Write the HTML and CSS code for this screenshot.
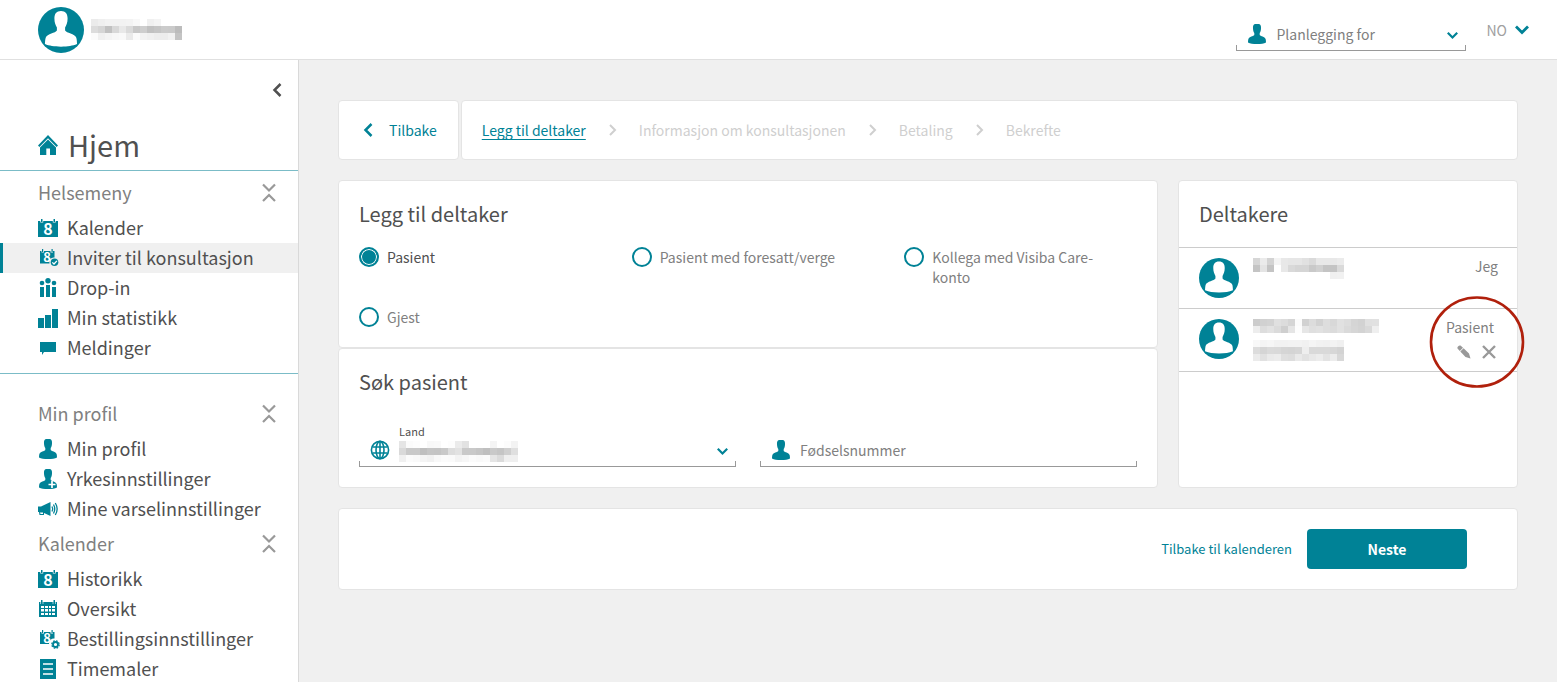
FILE: index.html
```html
<!DOCTYPE html>
<html lang="no">
<head>
<meta charset="utf-8">
<meta name="viewport" content="width=device-width, initial-scale=1">
<title>Inviter til konsultasjon</title>
<link rel="stylesheet" href="styles.css">
</head>
<body>
<svg class="sprite" aria-hidden="true">
  <symbol id="person" viewBox="0 0 20 20"><path d="M8 0H12C13.600 0.600 14.200 2 14 4.500C13.900 6.600 13.400 8 12.700 9V11C13.500 12.200 17.800 12.600 18.600 15C19 16.400 19 18.400 19 18.400C17 19.600 14 20 10 20S3 19.600 1 18.400C1 18.400 1 16.400 1.400 15C2.200 12.600 6.500 12.200 7.300 11V9C6.600 8 6.100 6.600 6 4.500C5.800 2 6.400 0.600 8 0Z"/></symbol>
  <symbol id="avatar" viewBox="0 0 46 46"><circle cx="23" cy="23" r="23" fill="#008296"/><g transform="translate(5.2 4) scale(1.78 1.8)"><path fill="#fff" d="M10 0C12.6 0 13.7 1.6 13.7 4.2C13.7 6.6 13 8 12.3 9.2V10.8C13 12.2 17.8 12.6 18.6 14.8C19 16.2 19 18.4 19 18.4C16.5 19.4 14 19.8 10 19.8S3.500 19.4 1 18.4C1 18.4 1 16.200 1.4 14.8C2.2 12.6 7 12.2 7.700 10.8V9.2C7 8 6.300 6.6 6.300 4.2C6.300 1.6 7.4 0 10 0Z"/></g></symbol>
  <symbol id="home" viewBox="0 0 22 20"><path d="M10 0L20 10.500L18.600 12L10 3.200L1.400 12L0 10.500Z"/><path d="M10 4.500L18 12.600V20H12V13.500H8.300V20H2V12.600Z"/></symbol>
  <symbol id="calendar" viewBox="0 0 22 20"><path d="M0 3H2.300V4.600H5.200V3H14.800V4.600H17.700V3H20V19H0ZM3 1H4.500V4H3ZM15.500 1H17V4H15.500Z"/><text class="digit" x="10" y="17" font-size="16">8</text></symbol>
  <symbol id="calendar-check" viewBox="0 0 22 20"><path d="M2 3H3.500V4.600H6V3H12.500V4.600H15V3H16.500V9.500A4.500 4.500 0 0 0 11.500 15.500H2ZM4 1H5.200V4H4ZM13.500 1H14.700V4H13.500Z"/><text class="digit" x="9" y="14" font-size="13">8</text><circle cx="16.500" cy="14.300" r="3.800"/><path d="M14.300 14.400L16 16L18.900 12.900" fill="none" stroke="#fff" stroke-width="1.300"/></symbol>
  <symbol id="calendar-gear" viewBox="0 0 22 20"><path d="M2 3H3.500V4.600H6V3H12.500V4.600H15V3H16.500V9.500A5 5 0 0 0 11 15H2ZM4 1H5.200V4H4ZM13.500 1H14.700V4H13.500Z"/><text class="digit" x="9" y="14" font-size="13">8</text><circle cx="17.500" cy="15.500" r="2.500" fill="none" stroke="#008296" stroke-width="1.800"/><circle cx="17.500" cy="15.500" r="3.700" fill="none" stroke="#008296" stroke-width="1.300" stroke-dasharray="1.700 1.206"/></symbol>
  <symbol id="people" viewBox="0 0 22 20"><circle cx="4" cy="5" r="2.300"/><circle cx="10" cy="2.800" r="2.700"/><circle cx="16" cy="5" r="2.300"/><path d="M2 9H6V19H2ZM8 7H12V19H8ZM14 9H18V19H14Z"/></symbol>
  <symbol id="bars" viewBox="0 0 22 20"><path d="M0 10H6V20H0ZM7 7H13V20H7ZM14 1H20V20H14Z"/></symbol>
  <symbol id="bubble" viewBox="0 0 22 20"><path d="M2 4H18V14H6L4 17V14H2Z"/></symbol>
  <symbol id="person-plus" viewBox="0 0 22 20"><use href="#person" width="20" height="20"/><path d="M14 12V19M10.500 15.500H17.500" fill="none" stroke="#fff" stroke-width="1.700"/></symbol>
  <symbol id="horn" viewBox="0 0 22 20"><path d="M12.500 3V17L6 14V16H1.500L1 13H0V7.500H3ZM2 13.500L2.500 15H5V13.500Z" fill-rule="evenodd"/><path d="M14 7.500Q15.500 10 14 12.500M15.500 5.500Q18 10 15.500 14.500M17.300 4Q21 10 17.300 16" fill="none" stroke="#008296" stroke-width="1.300"/></symbol>
  <symbol id="calendar-grid" viewBox="0 0 22 20"><path d="M1 3H19V18H1Z"/><path d="M3 1H4.500V4H3ZM15.500 1H17V4H15.500Z"/><path fill="#fff" d="M3 7H6V9H3ZM7 7H10V9H7ZM11 7H13V9H11ZM14 7H17V9H14ZM3 10H6V12.500H3ZM7 10H10V12.500H7ZM11 10H13V12.500H11ZM14 10H17V12.500H14ZM3 14H6V16H3ZM7 14H10V16H7ZM11 14H13V16H11ZM14 14H17V16H14ZM2.200 3H2.800V5H2.200ZM4.700 3H5.300V5H4.700ZM14.700 3H15.300V5H14.700ZM17.200 3H17.800V5H17.200Z"/></symbol>
  <symbol id="sheet" viewBox="0 0 22 20"><path d="M2 0H18V20H2Z"/><path d="M5 5H15M5 10H15M5 15H15" stroke="#fff" stroke-width="1.500"/></symbol>
  <symbol id="collapse" viewBox="0 0 14 20"><path d="M1 1.500L7 7.500L13 1.500M1 18L7 12L13 18" fill="none" stroke="#999" stroke-width="2.200"/></symbol>
  <symbol id="down" viewBox="0 0 14 10"><path d="M1 1.500L7 7.500L13 1.500" fill="none" stroke="currentColor" stroke-width="2.800"/></symbol>
  <symbol id="left" viewBox="0 0 10 14"><path d="M8.500 1L2.500 7L8.500 13" fill="none" stroke="currentColor" stroke-width="2.500"/></symbol>
  <symbol id="right" viewBox="0 0 10 14"><path d="M2 2L7 7L2 12" fill="none" stroke="currentColor" stroke-width="2"/></symbol>
  <symbol id="globe" viewBox="0 0 20 20"><g fill="none" stroke="#008296" stroke-width="1.600"><circle cx="10" cy="10" r="8.600"/><ellipse cx="10" cy="10" rx="4" ry="8.600"/><path d="M10 1V19M2.500 7H17.500M2.500 13H17.500"/></g></symbol>
  <symbol id="pencil" viewBox="0 0 14 14"><path d="M3.500 0.500L6 2.800L2.800 6L0.500 3.500Q0 2.500 1 1.500Q2.300 0 3.500 0.500ZM6.600 3.300L12 8.500L13.500 13.500L8.500 12L3.300 6.600Z"/></symbol>
  <symbol id="cross" viewBox="0 0 14 14"><path d="M1 1L13 13M13 1L1 13" stroke="currentColor" stroke-width="2.400"/></symbol>
</svg>

<header class="topbar">
  <div class="user">
    <svg class="avatar-large" aria-hidden="true"><use href="#avatar"/></svg>
    <svg class="mosaic" data-cells="ebeff2f2f2f3f8fff0f4ffffff,dcd5c1d8e8dac8cec1c5cbcabc,fbf0f4f7f9eafbf3f0ededf2c4"></svg>
  </div>
  <div class="topbar-tools">
    <div class="field field-compact">
      <svg class="field-icon" aria-hidden="true"><use href="#person"/></svg>
      <select class="field-control" aria-label="Planlegging for"><option>Planlegging for</option></select>
      <svg class="field-arrow" aria-hidden="true"><use href="#down"/></svg>
    </div>
    <button class="language" type="button">NO <svg class="language-arrow" aria-hidden="true"><use href="#down"/></svg></button>
  </div>
</header>

<div class="shell">
  <nav class="sidebar" aria-label="Hovedmeny">
    <button class="sidebar-toggle" type="button" aria-label="Skjul meny"><svg class="icon-left" aria-hidden="true"><use href="#left"/></svg></button>
    <a class="home" href="#"><svg class="nav-icon" aria-hidden="true"><use href="#home"/></svg>Hjem</a>
    <section class="nav-main">
      <button class="nav-heading" type="button">Helsemeny <svg class="icon-collapse" aria-hidden="true"><use href="#collapse"/></svg></button>
      <a class="nav-item" href="#"><svg class="nav-icon" aria-hidden="true"><use href="#calendar"/></svg>Kalender</a>
      <a class="nav-item nav-item-active" href="#" aria-current="page"><svg class="nav-icon" aria-hidden="true"><use href="#calendar-check"/></svg>Inviter til konsultasjon</a>
      <a class="nav-item" href="#"><svg class="nav-icon" aria-hidden="true"><use href="#people"/></svg>Drop-in</a>
      <a class="nav-item" href="#"><svg class="nav-icon" aria-hidden="true"><use href="#bars"/></svg>Min statistikk</a>
      <a class="nav-item" href="#"><svg class="nav-icon" aria-hidden="true"><use href="#bubble"/></svg>Meldinger</a>
    </section>
    <section class="nav-more">
      <button class="nav-heading" type="button">Min profil <svg class="icon-collapse" aria-hidden="true"><use href="#collapse"/></svg></button>
      <a class="nav-item" href="#"><svg class="nav-icon" viewBox="0 0 22 20" aria-hidden="true"><use href="#person" width="20" height="20"/></svg>Min profil</a>
      <a class="nav-item" href="#"><svg class="nav-icon" aria-hidden="true"><use href="#person-plus"/></svg>Yrkesinnstillinger</a>
      <a class="nav-item" href="#"><svg class="nav-icon" aria-hidden="true"><use href="#horn"/></svg>Mine varselinnstillinger</a>
      <button class="nav-heading" type="button">Kalender <svg class="icon-collapse" aria-hidden="true"><use href="#collapse"/></svg></button>
      <a class="nav-item" href="#"><svg class="nav-icon" aria-hidden="true"><use href="#calendar"/></svg>Historikk</a>
      <a class="nav-item" href="#"><svg class="nav-icon" aria-hidden="true"><use href="#calendar-grid"/></svg>Oversikt</a>
      <a class="nav-item" href="#"><svg class="nav-icon" aria-hidden="true"><use href="#calendar-gear"/></svg>Bestillingsinnstillinger</a>
      <a class="nav-item" href="#"><svg class="nav-icon" aria-hidden="true"><use href="#sheet"/></svg>Timemaler</a>
    </section>
  </nav>

  <main class="content">
    <div class="steps-bar">
      <a class="card back" href="#"><svg class="icon-left" aria-hidden="true"><use href="#left"/></svg>Tilbake</a>
      <ol class="card steps">
        <li class="step"><a class="step-current" href="#" aria-current="step">Legg til deltaker</a></li>
        <li class="step"><svg class="icon-right" aria-hidden="true"><use href="#right"/></svg>Informasjon om konsultasjonen</li>
        <li class="step"><svg class="icon-right" aria-hidden="true"><use href="#right"/></svg>Betaling</li>
        <li class="step"><svg class="icon-right" aria-hidden="true"><use href="#right"/></svg>Bekrefte</li>
      </ol>
    </div>

    <div class="columns">
      <div class="forms">
        <section class="card panel">
          <h2 class="title" id="add-title">Legg til deltaker</h2>
          <div class="choices" role="radiogroup" aria-labelledby="add-title">
            <label class="choice"><input class="radio" type="radio" name="kind" checked><span>Pasient</span></label>
            <label class="choice"><input class="radio" type="radio" name="kind"><span>Pasient med foresatt/verge</span></label>
            <label class="choice"><input class="radio" type="radio" name="kind"><span>Kollega med Visiba Care-konto</span></label>
            <label class="choice"><input class="radio" type="radio" name="kind"><span>Gjest</span></label>
          </div>
        </section>
        <section class="card panel">
          <h2 class="title">Søk pasient</h2>
          <div class="fields">
            <div class="field">
              <label class="field-label" for="country">Land</label>
              <svg class="field-icon" aria-hidden="true"><use href="#globe"/></svg>
              <select class="field-control" id="country"><option></option></select>
              <svg class="mosaic field-mosaic" data-cells="e5fbfdfff8f9fffdebe2fffffff4fffcf3,d9c9c9bfc5c4c9dde2c9c9c5bfc9c5cfdf,f0fbf9f4f1f8fbfaf3f6fbf9fbe5dbefef"></svg>
              <svg class="field-arrow" aria-hidden="true"><use href="#down"/></svg>
            </div>
            <div class="field">
              <svg class="field-icon" aria-hidden="true"><use href="#person"/></svg>
              <input class="field-control" type="text" placeholder="Fødselsnummer" aria-label="Fødselsnummer">
            </div>
          </div>
        </section>
      </div>

      <aside class="card participants">
        <h2 class="title participants-title">Deltakere</h2>
        <div class="participant">
          <svg class="avatar" aria-hidden="true"><use href="#avatar"/></svg>
          <div class="participant-name"><svg class="mosaic" data-cells="d6ebd3f4e8e6e6e1dae8e8e8eb,c4e4c4ffe8d9d5d5c9d0c4c4da,fffffffffffffffffffffff0f1"></svg></div>
          <div class="participant-role">Jeg</div>
        </div>
        <div class="participant">
          <svg class="avatar" aria-hidden="true"><use href="#avatar"/></svg>
          <div class="participant-name">
            <svg class="mosaic" data-cells="ccd1d3e0dcd5fbd1dcd2ddd8e1ddd5d2e0e1,eddde2dbcfe5fde6dfe1dddbe1dad6d3d9ef"></svg>
            <svg class="mosaic" data-cells="f8f4f6f2f2f3f3f1f5f2f1f3f0,dcd5dad9d5d4d6eed9d9d9d7d3,ebe1eaecdfdde9e2e8ece3ecd8"></svg>
          </div>
          <div class="participant-role participant-role-editable">Pasient
            <div class="actions">
              <button class="icon-button" type="button" aria-label="Rediger"><svg class="icon-action" aria-hidden="true"><use href="#pencil"/></svg></button>
              <button class="icon-button" type="button" aria-label="Fjern"><svg class="icon-action" aria-hidden="true"><use href="#cross"/></svg></button>
            </div>
          </div>
          <svg class="marker" viewBox="0 0 96 92" aria-hidden="true"><ellipse cx="48" cy="46" rx="46" ry="44.500" fill="none" stroke="#b0200c" stroke-width="2.600"/></svg>
        </div>
      </aside>
    </div>

    <footer class="card footer">
      <a class="footer-link" href="#">Tilbake til kalenderen</a>
      <button class="next" type="button">Neste</button>
    </footer>
  </main>
</div>
<script src="mosaic.js"></script>
</body>
</html>
```

FILE: mosaic.js
```js
// Paints each masked name as a grid of grey 7px cells.
// data-cells holds one row per comma, two hex digits of grey per cell.
const CELL = 7;
document.querySelectorAll(".mosaic").forEach((svg) => {
  const rows = svg.dataset.cells.split(",").map((row) => row.match(/../g));
  svg.setAttribute("width", rows[0].length * CELL);
  svg.setAttribute("height", rows.length * CELL);
  svg.setAttribute("aria-hidden", "true");
  rows.forEach((row, y) => row.forEach((tone, x) => {
    const rect = document.createElementNS("http://www.w3.org/2000/svg", "rect");
    rect.setAttribute("x", x * CELL);
    rect.setAttribute("y", y * CELL);
    rect.setAttribute("width", CELL);
    rect.setAttribute("height", CELL);
    rect.setAttribute("fill", "#" + tone.repeat(3));
    svg.appendChild(rect);
  }));
});
```

FILE: styles.css
```css
:root {
  --teal: #008296;
  --text: #505050;
  --muted: #808080;
  --faint: #cfcfcf;
  --edge: #e4e4e4;
  --page: #f0f0f0;
}

* { box-sizing: border-box; }

body {
  margin: 0;
  height: 100vh;
  display: flex;
  flex-direction: column;
  overflow: hidden;
  background: var(--page);
  color: var(--text);
  font-family: "Noto Sans CJK JP", "Noto Sans", sans-serif;
  font-size: 14px;
  line-height: 20px;
}

a { color: inherit; text-decoration: none; }
button, input, select { font: inherit; color: inherit; }
button { background: none; border: 0; padding: 0; cursor: pointer; }
svg { display: block; flex: none; fill: var(--teal); }
.sprite { display: none; }
.digit { fill: #fff; font-weight: 700; text-anchor: middle; }

.topbar {
  display: flex;
  flex: none;
  justify-content: space-between;
  height: 60px;
  padding: 0 28px 0 38px;
  background: #fff;
  border-bottom: 1px solid #e0e0e0;
}
.user { display: flex; align-items: center; gap: 7px; }
.avatar-large { width: 46px; height: 46px; }
.topbar-tools { display: flex; align-items: center; gap: 20px; }
.language { display: flex; align-items: center; gap: 8px; color: #a0a0a0; }
.language-arrow { width: 14px; height: 10px; color: var(--teal); }

.field { position: relative; height: 50px; }
.field::after {
  content: "";
  position: absolute;
  inset: auto 0 0;
  height: 5px;
  border: 1px solid #999;
  border-top: 0;
  pointer-events: none;
}
.field-control {
  display: block;
  appearance: none;
  width: 100%;
  height: 100%;
  margin: 0;
  padding: 16px 40px 0;
  border: 0;
  outline: 0;
  background: none;
  color: var(--muted);
}
.field-control::placeholder { color: var(--muted); opacity: 1; }
.field-icon { position: absolute; left: 11px; bottom: 7px; width: 20px; height: 20px; }
.field-arrow { position: absolute; right: 8px; bottom: 11px; width: 11px; height: 9px; color: var(--teal); }
.field-label { position: absolute; left: 40px; top: 8px; font-size: 11px; line-height: 12px; }
.field-mosaic { position: absolute; left: 40px; bottom: 5px; }
.field-compact { width: 230px; height: 34px; align-self: flex-end; margin-bottom: 8px; }
.field-compact .field-control { padding-top: 0; }

.shell { display: flex; flex: 1; min-height: 0; }

.sidebar {
  flex: none;
  width: 299px;
  overflow-y: auto;
  scrollbar-width: none;
  background: #fff;
  border-right: 1px solid #d9d9d9;
  font-size: 18px;
}
.sidebar-toggle { display: flex; justify-content: flex-end; width: 100%; padding: 23px 16px; color: var(--text); }
.icon-left { width: 10px; height: 14px; }
.home {
  display: flex;
  align-items: flex-start;
  gap: 8px;
  height: 51px;
  padding-left: 38px;
  border-bottom: 1px solid #7bbcc7;
  font-size: 29px;
  line-height: 48px;
}
.nav-main { padding: 2px 0 10px; border-bottom: 1px solid #7bbcc7; }
.nav-more { padding-top: 20px; }
.nav-heading {
  display: flex;
  align-items: flex-start;
  justify-content: space-between;
  width: 100%;
  height: 40px;
  padding: 0 22px 0 38px;
  color: var(--muted);
  line-height: 38px;
}
.icon-collapse { align-self: center; width: 14px; height: 20px; }
.nav-item {
  display: flex;
  align-items: flex-start;
  gap: 7px;
  height: 30px;
  padding-left: 38px;
  line-height: 28px;
}
.nav-item-active { padding-left: 35px; border-left: 3px solid var(--teal); background: var(--page); }
.nav-icon { align-self: center; width: 22px; height: 20px; }

.content { flex: 1; min-width: 0; padding: 40px 39px; }
.card { background: #fff; border: 1px solid var(--edge); border-radius: 4px; }

.steps-bar { display: flex; gap: 2px; height: 60px; }
.back { display: flex; align-items: center; gap: 16px; padding: 0 21px 0 24px; color: var(--teal); }
.steps { display: flex; flex: 1; align-items: center; margin: 0; padding: 0 20px; list-style: none; color: var(--faint); }
.step { display: flex; align-items: center; }
.step-current { color: var(--teal); text-decoration: underline; text-underline-offset: 3px; }
.icon-right { width: 10px; height: 14px; margin: 0 21px 0 22px; }

.columns { display: grid; grid-template-columns: 1fr 340px; gap: 20px; margin: 20px 0; }
.panel { padding: 20px; }
.title { margin: 0; padding-bottom: 2px; font-size: 20px; font-weight: 400; line-height: 26px; }
.choices { display: grid; grid-template-columns: repeat(3, 1fr); gap: 20px; margin: 18px -20px 0 0; }
.choice { display: flex; align-items: flex-start; gap: 8px; padding-right: 40px; color: var(--muted); }
.choice:has(:checked) { color: var(--text); }
.radio {
  appearance: none;
  flex: none;
  width: 20px;
  height: 20px;
  margin: 0;
  border: 2px solid var(--teal);
  border-radius: 50%;
}
.radio:checked { background: var(--teal); box-shadow: inset 0 0 0 1px #fff; }
.fields { display: grid; grid-template-columns: 1fr 1fr; gap: 24px; margin-top: 20px; }

.participants-title { padding: 20px; border-bottom: 1px solid #ccc; }
.participant {
  position: relative;
  display: flex;
  gap: 14px;
  padding: 10px 19px 10px 20px;
  border-bottom: 1px solid #ccc;
  line-height: 16px;
}
.avatar { width: 40px; height: 40px; }
.participant-name { display: grid; flex: 1; align-content: start; gap: 7px; }
.participant-role { color: var(--muted); }
.participant-role-editable { padding-right: 4px; }
.actions { display: flex; align-items: center; justify-content: flex-end; gap: 11px; height: 18px; margin: 8px -2px 0 0; }
.icon-action { width: 14px; height: 14px; color: #999; fill: #999; }
.marker { position: absolute; right: -8px; top: -13px; width: 96px; height: 92px; pointer-events: none; }

.footer { display: flex; align-items: center; justify-content: flex-end; gap: 15px; padding: 20px 50px; }
.footer-link { color: var(--teal); font-size: 13px; }
.next { width: 160px; height: 40px; border-radius: 4px; background: var(--teal); color: #fff; font-weight: 700; }
```
